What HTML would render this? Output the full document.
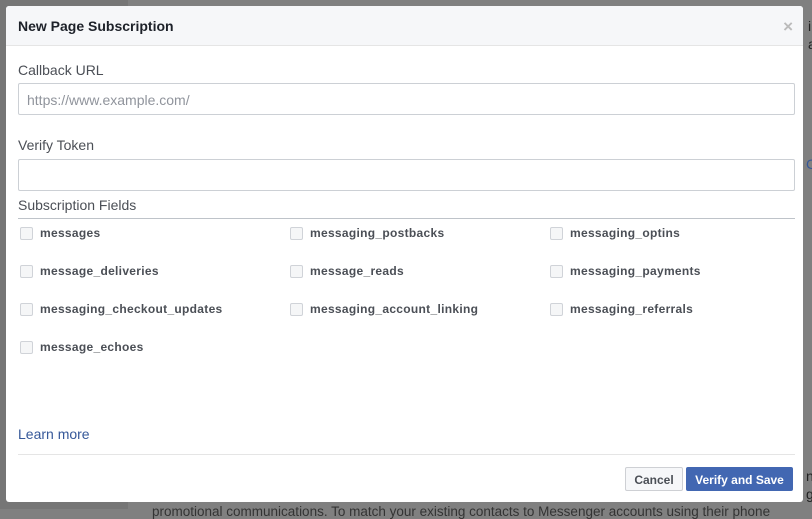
<!DOCTYPE html>
<html><head><meta charset="utf-8"><style>
*{box-sizing:border-box;margin:0;padding:0}
body{width:812px;height:509px;overflow:hidden;background:#808080;font-family:"Liberation Sans",Helvetica,Arial,sans-serif;position:relative}
.side{position:absolute;left:0;top:0;width:128px;height:509px;background:#767676}
.bgtxt{position:absolute;color:#222;font-size:14px;white-space:nowrap}
.modal{position:absolute;left:6px;top:6px;width:797px;height:496px;background:#fff;border-radius:3px;overflow:hidden}
.hd{height:40px;background:#f6f7f9;border-bottom:1px solid #e5e5e5;padding:12px 12px;font-weight:bold;font-size:14px;color:#1d2129}
.x{position:absolute;right:10px;top:11px;color:#bbb;font-size:17px;font-weight:bold}
.lbl{position:absolute;left:12px;font-size:14px;color:#4b4f56}
.inp{position:absolute;left:12px;width:777px;height:32px;border:1px solid #ccd0d5;border-radius:2px;font-size:14px;color:#90949c;padding:8px 8px}
.line{position:absolute;left:12px;width:777px;height:1px;background:#bec3c9}
.cb{position:absolute;font-size:12px;font-weight:bold;color:#4b4f56;letter-spacing:.3px}
.cb i{position:absolute;left:0;top:1px;width:13px;height:13px;border:1px solid #d0d3d8;border-radius:2px;background:#f5f6f7}
.cb span{position:absolute;left:20px;top:0;white-space:nowrap}
.btn{position:absolute;top:461px;height:24px;border-radius:2px;font-size:12px;font-weight:bold;padding:5px 0;text-align:center;white-space:nowrap}
</style></head><body>
<div class="side"></div>
<div class="bgtxt" style="left:808px;top:18px">i</div>
<div class="bgtxt" style="left:808px;top:36px">a</div>
<div class="bgtxt" style="left:806px;top:156px;color:#365899">C</div>
<div class="bgtxt" style="left:806px;top:468px">n</div>
<div class="bgtxt" style="left:806px;top:486px">g</div>
<div class="bgtxt" style="left:152px;top:504px;font-size:13.5px;color:#333">promotional communications. To match your existing contacts to Messenger accounts using their phone</div>
<div class="modal">
<div class="hd">New Page Subscription</div>
<div class="x">×</div>
<div class="lbl" style="top:56px">Callback URL</div>
<div class="inp" style="top:77px">https://www.example.com/</div>
<div class="lbl" style="top:131px">Verify Token</div>
<div class="inp" style="top:153px"></div>
<div class="lbl" style="top:191px">Subscription Fields</div>
<div class="line" style="top:212px"></div>

<div class="cb" style="left:14px;top:220px"><i></i><span>messages</span></div>
<div class="cb" style="left:284px;top:220px"><i></i><span>messaging_postbacks</span></div>
<div class="cb" style="left:544px;top:220px"><i></i><span>messaging_optins</span></div>
<div class="cb" style="left:14px;top:258px"><i></i><span>message_deliveries</span></div>
<div class="cb" style="left:284px;top:258px"><i></i><span>message_reads</span></div>
<div class="cb" style="left:544px;top:258px"><i></i><span>messaging_payments</span></div>
<div class="cb" style="left:14px;top:296px"><i></i><span>messaging_checkout_updates</span></div>
<div class="cb" style="left:284px;top:296px"><i></i><span>messaging_account_linking</span></div>
<div class="cb" style="left:544px;top:296px"><i></i><span>messaging_referrals</span></div>
<div class="cb" style="left:14px;top:334px"><i></i><span>message_echoes</span></div>

<div class="lbl" style="top:420px;color:#365899">Learn more</div>
<div class="line" style="top:448px;background:#e5e5e5"></div>
<div class="btn" style="left:619px;width:58px;background:#f6f7f9;border:1px solid #ced0d4;color:#4b4f56">Cancel</div>
<div class="btn" style="left:680px;width:107px;background:#4267b2;border:1px solid #4267b2;color:#fff">Verify and Save</div>
</div>
</body></html>
